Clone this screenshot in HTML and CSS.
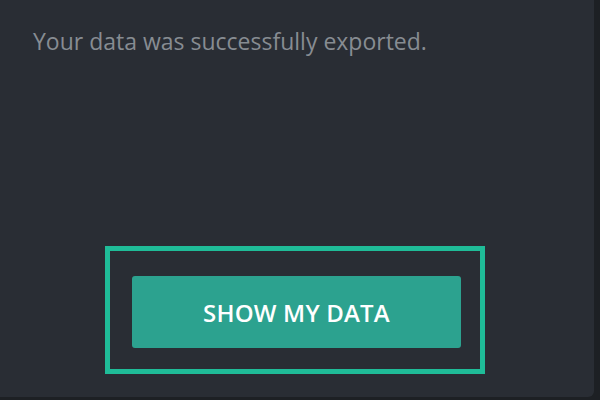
FILE: index.html
```html
<!DOCTYPE html>
<html>
<head>
<meta charset="utf-8">
<link rel="stylesheet" href="styles.css">
</head>
<body>
<div class="panel">
  <p class="message">Your data was successfully exported.</p>
  <div class="focus-ring">
    <button class="show-btn">SHOW MY DATA</button>
  </div>
</div>
</body>
</html>
```

FILE: styles.css
```css
html, body {
  margin: 0;
  padding: 0;
  width: 600px;
  height: 400px;
  overflow: hidden;
  background: #1d2024;
}
.panel {
  box-sizing: border-box;
  margin-left: -6px;
  margin-top: -10px;
  width: 600px;
  height: 407px;
  background: #292d34;
  border-radius: 6px;
  padding-top: 37px;
  padding-left: 39px;
  font-family: "Open Sans", "Noto Sans", sans-serif;
}
.message {
  margin: 0;
  color: #878c92;
  font-size: 23px;
  line-height: 28px;
}
.focus-ring {
  box-sizing: border-box;
  margin-top: 191px;
  margin-left: 72px;
  width: 380px;
  height: 128px;
  border: 5px solid #1fbc98;
  padding: 25px 19px 21px 22px;
}
.show-btn {
  display: block;
  width: 329px;
  height: 72px;
  border: 0;
  border-radius: 3px;
  background: #2ca28f;
  color: #ffffff;
  font-family: "Open Sans", "Noto Sans", sans-serif;
  font-weight: 600;
  font-size: 24px;
  letter-spacing: 0.2px;
  padding: 0;
}
```
